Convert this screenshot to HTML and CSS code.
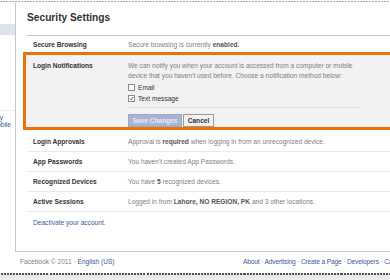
FILE: index.html
```html
<!DOCTYPE html>
<html>
<head>
<meta charset="utf-8">
<link rel="stylesheet" href="styles.css">
</head>
<body>
<div class="topedge"></div>
<div class="page">
  <div class="sidebar">
    <div class="side-sel"></div>
    <div class="side-links">
      <div class="side-link l1">Privacy</div>
      <div class="side-link l2">Mobile</div>
    </div>
  </div>
  <div class="main">
    <h2 class="title">Security Settings</h2>
    <div class="row first">
      <div class="label">Secure Browsing</div>
      <div class="value">Secure browsing is currently <b>enabled.</b></div>
    </div>
    <div class="editbox">
      <div class="label">Login Notifications</div>
      <div class="editcol">
        <p class="desc">We can notify you when your account is accessed from a computer or mobile device that you haven't used before. Choose a notification method below:</p>
        <div class="opt"><span class="cb"></span><span class="optlabel">Email</span></div>
        <div class="opt"><span class="cb checked"><svg viewBox="0 0 7 7" width="7" height="7"><path d="M1.3 3.6 L2.8 5.3 L5.8 1.2" fill="none" stroke="#2b4c9b" stroke-width="1.2"/></svg></span><span class="optlabel">Text message</span></div>
        <div class="sep"></div>
        <div class="buttons">
          <span class="btn save">Save Changes</span>
          <span class="btn cancel">Cancel</span>
        </div>
      </div>
    </div>
    <div class="row r1">
      <div class="label">Login Approvals</div>
      <div class="value">Approval is <b>required</b> when logging in from an unrecognized device.</div>
    </div>
    <div class="row">
      <div class="label">App Passwords</div>
      <div class="value">You haven't created App Passwords.</div>
    </div>
    <div class="row">
      <div class="label">Recognized Devices</div>
      <div class="value">You have <b>5</b> recognized devices.</div>
    </div>
    <div class="row">
      <div class="label">Active Sessions</div>
      <div class="value">Logged in from <b>Lahore, NO REGION, PK</b> and 3 other locations.</div>
    </div>
    <div class="deactivate"><a class="link">Deactivate your account.</a></div>
  </div>
</div>
<div class="footer">
  <div class="foot-left">Facebook © 2011 · <a class="link">English (US)</a></div>
  <div class="foot-right"><a class="link">About</a> · <a class="link">Advertising</a> · <a class="link">Create a Page</a> · <a class="link">Developers</a> · <a class="link">Careers</a> · <a class="link">Privacy</a> · <a class="link">Terms</a> · <a class="link">Help</a></div>
</div>
<div class="bottomedge"></div>
</body>
</html>
```
FILE: styles.css
```css
html, body {
  margin: 0;
  padding: 0;
}
body {
  width: 390px;
  height: 280px;
  overflow: hidden;
  background: #fff;
  font-family: "Liberation Sans", Tahoma, Arial, sans-serif;
  font-size: 6.6px;
  color: #333;
}
.topedge {
  margin-top: 1px;
  height: 1px;
  background: repeating-linear-gradient(to right, #a4a8b0 0 2px, transparent 2px 3px);
  margin-bottom: 1px;
}
.page {
  display: flex;
  height: 249px;
}
.sidebar {
  width: 15px;
  flex: 0 0 15px;
  overflow: hidden;
}
.side-sel {
  margin-top: 21px;
  height: 11px;
  background: #dfe3ee;
}
.side-links {
  margin-top: 75px;
  border-top: 1px solid #eee;
  padding-top: 3px;
}
.side-link {
  direction: rtl;
  white-space: nowrap;
  color: #3b5998;
  line-height: 7px;
}
.l1 { padding-right: 12px; }
.l2 { padding-right: 4px; }
.main {
  flex: 1;
  box-sizing: border-box;
  border-left: 1px solid #c8c8c8;
  border-bottom: 1px solid #c8c8c8;
  padding-left: 11px;
  min-width: 0;
}
.title {
  margin: 0;
  padding-top: 8px;
  height: 24px;
  border-bottom: 1px solid #c4c4c4;
  font-size: 10.2px;
  line-height: 13px;
  font-weight: bold;
  color: #2f3033;
}
.row {
  display: flex;
  height: 19px;
  line-height: 19px;
  border-bottom: 1px solid #e9e9e9;
  white-space: nowrap;
}
.row.first {
  height: 16px;
  line-height: 17px;
  border-bottom: none;
}
.row.r1 {
  height: 21px;
  line-height: 23px;
}
.label {
  width: 95px;
  flex: 0 0 95px;
  padding-left: 6px;
  font-weight: bold;
  color: #333;
}
.value {
  color: #808080;
}
.value b {
  color: #555;
}
.editbox {
  display: flex;
  margin-left: -4px;
  margin-right: -30px;
  border: 3px solid #e8720c;
  background: #f2f2f2;
  padding: 6px 0 1px 7px;
  height: 65px;
}
.editbox .label {
  width: 95px;
  flex: 0 0 95px;
  padding-left: 0;
  line-height: 9.5px;
}
.editcol {
  flex: 1;
}
.desc {
  margin: 0;
  width: 240px;
  line-height: 9.5px;
  color: #808080;
}
.opt {
  display: flex;
  align-items: center;
  height: 11px;
}
.opt:first-of-type {
  margin-top: 1.5px;
}
.cb {
  box-sizing: border-box;
  width: 7px;
  height: 7px;
  border: 1px solid #8c8c8c;
  background: #fff;
  display: inline-flex;
  align-items: center;
  justify-content: center;
}
.cb svg {
  display: block;
}
.optlabel {
  margin-left: 3px;
  color: #333;
}
.sep {
  margin-top: 3px;
  width: 232px;
  height: 1px;
  background: #dcdcdc;
}
.buttons {
  display: flex;
  gap: 1px;
  margin-top: 6px;
}
.btn {
  box-sizing: border-box;
  height: 13px;
  line-height: 11px;
  font-weight: bold;
  padding: 0;
  border: 1px solid;
  white-space: nowrap;
  text-align: center;
  flex: 0 0 auto;
}
.save {
  width: 54px;
  background: #a7b5d4;
  border-color: #9aa9cb;
  color: #e4e9f3;
}
.cancel {
  width: 31px;
  background: #f2f2f2;
  border-color: #999;
  color: #333;
}
.deactivate {
  padding-left: 6px;
  line-height: 21px;
}
.link {
  color: #3b5998;
  text-decoration: none;
}
.footer {
  display: flex;
  height: 21px;
  line-height: 19px;
  color: #808080;
  white-space: nowrap;
}
.foot-left {
  flex: 0 0 223px;
  padding-left: 20px;
}
.foot-right {
  flex: 0 0 auto;
  letter-spacing: -0.15px;
}
.bottomedge {
  height: 6px;
  border-top: 2px solid transparent;
  border-image: repeating-linear-gradient(to right, #4e4e4e 0 2px, transparent 2px 3px) 2;
  border-left: 0;
  border-right: 0;
  border-bottom: 0;
  background: #ececec;
}
```
